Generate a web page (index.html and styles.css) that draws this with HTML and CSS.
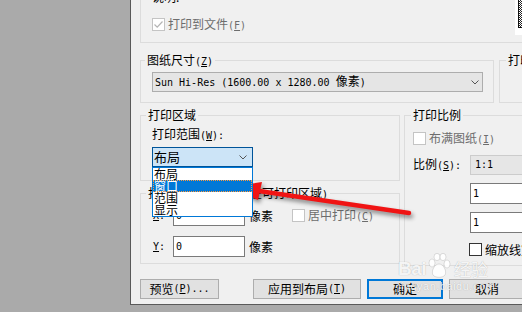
FILE: index.html
```html
<!DOCTYPE html>
<html lang="zh-CN">

<head>
    <meta charset="UTF-8">
    <title>打印 - 模型</title>
    <link rel="stylesheet" href="styles.css">
</head>

<body>
    <div class="screen">
        <div class="backdrop"></div>
        <div class="dialog">
            <div class="group printer">
                <div class="printer-info">
                    <div class="desc">说明:</div>
                    <div class="check off">
                        <span class="box"><svg width="11" height="11" viewBox="0 0 11 11"><path d="M1.5 5.5 L4.2 8.2 L9.5 2.5" fill="none" stroke="#b4b4b4" stroke-width="1.2"/></svg></span>
                        <span>打印到文件<span class="m">(<u>F</u>)</span></span>
                    </div>
                </div>
                <div class="preview"><div class="sheet"></div></div>
            </div>

            <div class="paper-row">
                <div class="group paper">
                    <span class="legend">图纸尺寸<span class="m">(<u>Z</u>)</span></span>
                    <div class="combo wide">
                        <span class="m">Sun Hi-Res (1600.00 x 1280.00 <span class="cjk">像素</span>)</span>
                        <svg width="8" height="5" viewBox="0 0 8 5"><path d="M0.5 0.5 L4 4 L7.5 0.5" fill="none" stroke="#555"/></svg>
                    </div>
                </div>
                <div class="group copies">
                    <span class="legend">打印份数<span class="m">(<u>B</u>)</span></span>
                </div>
            </div>

            <div class="main-row">
                <div class="left-col">
                    <div class="group area">
                        <span class="legend">打印区域</span>
                        <div class="field-label">打印范围<span class="m">(<u>W</u>):</span></div>
                        <div class="combo-wrap">
                            <div class="combo focus">
                                <span>布局</span>
                                <svg width="8" height="5" viewBox="0 0 8 5"><path d="M0.5 0.5 L4 4 L7.5 0.5" fill="none" stroke="#555"/></svg>
                            </div>
                            <ul class="list">
                                <li>布局</li>
                                <li class="sel">窗口</li>
                                <li>范围</li>
                                <li>显示</li>
                            </ul>
                        </div>
                    </div>
                    <div class="group offset">
                        <span class="legend">打印偏移<span class="m">(</span>原点设置在可打印区域<span class="m">)</span></span>
                        <div class="xy-row">
                            <span class="axis m"><u>X</u>:</span>
                            <div class="input m">0</div>
                            <span class="unit">像素</span>
                            <div class="check off center">
                                <span class="box"></span>
                                <span>居中打印<span class="m">(<u>C</u>)</span></span>
                            </div>
                        </div>
                        <div class="xy-row second">
                            <span class="axis m"><u>Y</u>:</span>
                            <div class="input m">0</div>
                            <span class="unit">像素</span>
                        </div>
                    </div>
                </div>

                <div class="group scale">
                    <span class="legend">打印比例</span>
                    <div class="check off fit">
                        <span class="box"></span>
                        <span>布满图纸<span class="m">(<u>I</u>)</span></span>
                    </div>
                    <div class="ratio-row">
                        <span class="ratio-label">比例<span class="m">(<u>S</u>):</span></span>
                        <div class="combo disabled m">1:1</div>
                    </div>
                    <div class="input m unit-input">1</div>
                    <div class="input m unit-input">1</div>
                    <div class="check lw">
                        <span class="box"></span>
                        <span>缩放线宽</span>
                    </div>
                </div>
            </div>

            <div class="buttons">
                <div class="btn preview-btn">预览<span class="m">(<u>P</u>)...</span></div>
                <div class="btn apply-btn">应用到布局<span class="m">(<u>T</u>)</span></div>
                <div class="btn ok-btn">确定</div>
                <div class="btn cancel-btn">取消</div>
            </div>
        </div>
    </div>

    <svg class="arrow" width="522" height="312" viewBox="0 0 522 312">
        <line x1="409" y1="213" x2="252" y2="190" stroke="#f01414" stroke-width="4.5" stroke-linecap="round"/>
        <polygon points="229,187 262,182 258,200" fill="#f01414"/>
    </svg>

    <div class="watermark">
        <div class="wm-logo">
            <span class="wm-bai">Bai</span>
            <svg width="24" height="26" viewBox="0 0 24 26">
                <ellipse cx="5" cy="10" rx="3" ry="4"/>
                <ellipse cx="10" cy="4" rx="3" ry="3.6"/>
                <ellipse cx="16" cy="4" rx="3" ry="3.6"/>
                <ellipse cx="20" cy="11" rx="3" ry="4"/>
                <path d="M12 11 C7 11 4 19 6 22 C8 25 16 25 18 22 C20 19 17 11 12 11 Z"/>
            </svg>
            <span class="wm-jy">经验</span>
        </div>
        <div class="wm-url">jingyan.baidu.com</div>
    </div>
</body>

</html>
```

FILE: styles.css
```css
* {
    box-sizing: border-box;
}

body {
    margin: 0;
    background: #aaaaaa;
    font-family: "Noto Sans CJK SC", sans-serif;
    font-size: 12px;
    line-height: 12px;
    color: #000;
    overflow: hidden;
}

.m {
    font-family: "DejaVu Sans Mono", monospace;
    font-size: 10px;
}

.cjk {
    font-family: "Noto Sans CJK SC", sans-serif;
    font-size: 12px;
}

.screen {
    display: flex;
    height: 312px;
}

.backdrop {
    width: 130px;
    flex: none;
}

.dialog {
    flex: 1;
    min-width: 0;
    height: 305px;
    background: #f0f0f0;
    border-left: 1px solid #5a5a5a;
    border-bottom: 1px solid #5a5a5a;
    padding-left: 9px;
    overflow: hidden;
}

/* group boxes */
.group {
    border: 1px solid #dcdcdc;
    flex: none;
}

.legend {
    display: block;
    width: fit-content;
    height: 12px;
    margin-top: -7px;
    padding: 0 2px;
    background: #f0f0f0;
    white-space: nowrap;
}

.printer {
    display: flex;
    width: 421px;
    height: 74px;
    margin-top: -31px;
    padding-left: 11px;
}

.printer-info {
    padding-top: 21px;
}

.desc {
    height: 12px;
}

.check {
    display: flex;
    align-items: center;
    gap: 3px;
    height: 13px;
    white-space: nowrap;
}

.printer .check {
    margin-top: 15px;
}

.box {
    display: flex;
    align-items: center;
    justify-content: center;
    width: 13px;
    height: 13px;
    flex: none;
    border: 1px solid #333;
    background: #fff;
}

.check.off {
    color: #6d6d6d;
}

.check.off .box {
    border-color: #c4c4c4;
}

.preview {
    margin-left: auto;
    margin-right: 15px;
    width: 30px;
    height: 65px;
    background: #fff;
    padding: 0 0 7px 3px;
}

.sheet {
    width: 20px;
    height: 100%;
    border-left: 1px solid #111;
    border-bottom: 1px solid #111;
    background: repeating-conic-gradient(#222 0 25%, #fff 0 50%) 0 0 / 2px 2px;
}

/* paper size */
.paper-row {
    display: flex;
    align-items: flex-start;
    gap: 5px;
    margin-top: 17px;
}

.paper {
    width: 354px;
    height: 43px;
    padding-left: 11px;
}

.paper .legend {
    margin-left: -7px;
}

.combo {
    display: flex;
    align-items: center;
    justify-content: space-between;
    height: 20px;
    background: #e5e5e5;
    border: 1px solid #adadad;
    white-space: nowrap;
}

.combo.wide {
    width: 331px;
    margin-top: 6px;
    padding: 0 3px 0 2px;
}

.copies {
    width: 120px;
    height: 43px;
    padding-left: 8px;
}

.copies .legend {
    margin-left: -2px;
}

/* print area + offset */
.main-row {
    display: flex;
    align-items: flex-start;
    gap: 4px;
    margin-top: 12px;
}

.left-col {
    width: 260px;
    flex: none;
    display: flex;
    flex-direction: column;
    gap: 12px;
}

.area {
    height: 66px;
    padding-left: 11px;
}

.area .legend {
    margin-left: -6px;
}

.field-label {
    margin-top: 7px;
    height: 12px;
}

.combo-wrap {
    position: relative;
    width: 101px;
    margin-top: 7px;
}

.combo.focus {
    background: #cce4f7;
    border-color: #005499;
    padding: 0 5px 0 1px;
    font-size: 13px;
}

.list {
    position: absolute;
    top: 100%;
    left: 0;
    z-index: 2;
    width: 101px;
    margin: 0;
    padding: 0;
    list-style: none;
    background: #fff;
    border: 1px solid #0078d7;
}

.list li {
    height: 12px;
    line-height: 12px;
    padding-left: 1px;
    font-size: 12px;
}

.list li.sel {
    background: #0078d7;
    color: #fff;
    outline: 1px dotted #ff9a3c;
    outline-offset: -1px;
}

.offset {
    height: 71px;
    padding-left: 12px;
}

.offset .legend {
    margin-left: -7px;
}

.xy-row {
    display: flex;
    align-items: center;
    height: 21px;
    margin-top: 6px;
}

.xy-row.second {
    margin-top: 10px;
}

.axis {
    width: 20px;
    flex: none;
}

.input {
    display: flex;
    align-items: center;
    width: 72px;
    height: 21px;
    flex: none;
    padding-left: 2px;
    background: #fff;
    border: 1px solid #7a7a7a;
}

.unit {
    margin-left: 4px;
    width: 24px;
    flex: none;
}

.check.center {
    margin-left: 19px;
}

/* scale */
.scale {
    width: 140px;
    height: 151px;
    padding-left: 8px;
}

.scale .legend {
    margin-left: -2px;
}

.check.fit {
    margin-top: 11px;
}

.ratio-row {
    display: flex;
    align-items: center;
    margin-top: 10px;
}

.ratio-label {
    width: 57px;
    flex: none;
}

.combo.disabled {
    width: 80px;
    background: #e6e6e6;
    border-color: #cccccc;
    padding-left: 4px;
}

.unit-input {
    width: 80px;
    margin-top: 8px;
    margin-left: 57px;
}

.check.lw {
    margin-top: 10px;
    margin-left: 56px;
}

/* bottom buttons */
.buttons {
    display: flex;
    margin-top: 13px;
}

.btn {
    display: flex;
    align-items: center;
    justify-content: center;
    height: 20px;
    flex: none;
    background: #e1e1e1;
    border: 1px solid #adadad;
    white-space: nowrap;
}

.preview-btn {
    width: 79px;
}

.apply-btn {
    width: 108px;
    margin-left: 34px;
}

.ok-btn {
    width: 76px;
    margin-left: 6px;
    border: 2px solid #0078d7;
}

.cancel-btn {
    width: 76px;
    margin-left: 6px;
}

/* overlays */
.arrow {
    position: absolute;
    left: 0;
    top: 0;
    pointer-events: none;
    filter: drop-shadow(2px 3px 2px rgba(0, 0, 0, 0.45));
}

.watermark {
    position: absolute;
    left: 398px;
    top: 253px;
    color: rgba(255, 255, 255, 0.9);
    text-shadow: 0 0 1px rgba(0, 0, 0, 0.3);
    pointer-events: none;
}

.wm-logo {
    display: flex;
    align-items: flex-end;
    gap: 1px;
}

.wm-bai {
    font-family: "Liberation Sans", sans-serif;
    font-weight: bold;
    font-size: 19px;
    line-height: 20px;
    letter-spacing: -0.5px;
}

.wm-logo svg {
    fill: rgba(255, 255, 255, 0.9);
    stroke: rgba(0, 0, 0, 0.15);
    stroke-width: 0.8;
}

.wm-jy {
    margin-left: 2px;
    font-size: 17px;
    line-height: 20px;
}

.wm-url {
    margin-top: 2px;
    font-family: "Liberation Sans", sans-serif;
    font-size: 11px;
    line-height: 11px;
    letter-spacing: 0.5px;
}
```
